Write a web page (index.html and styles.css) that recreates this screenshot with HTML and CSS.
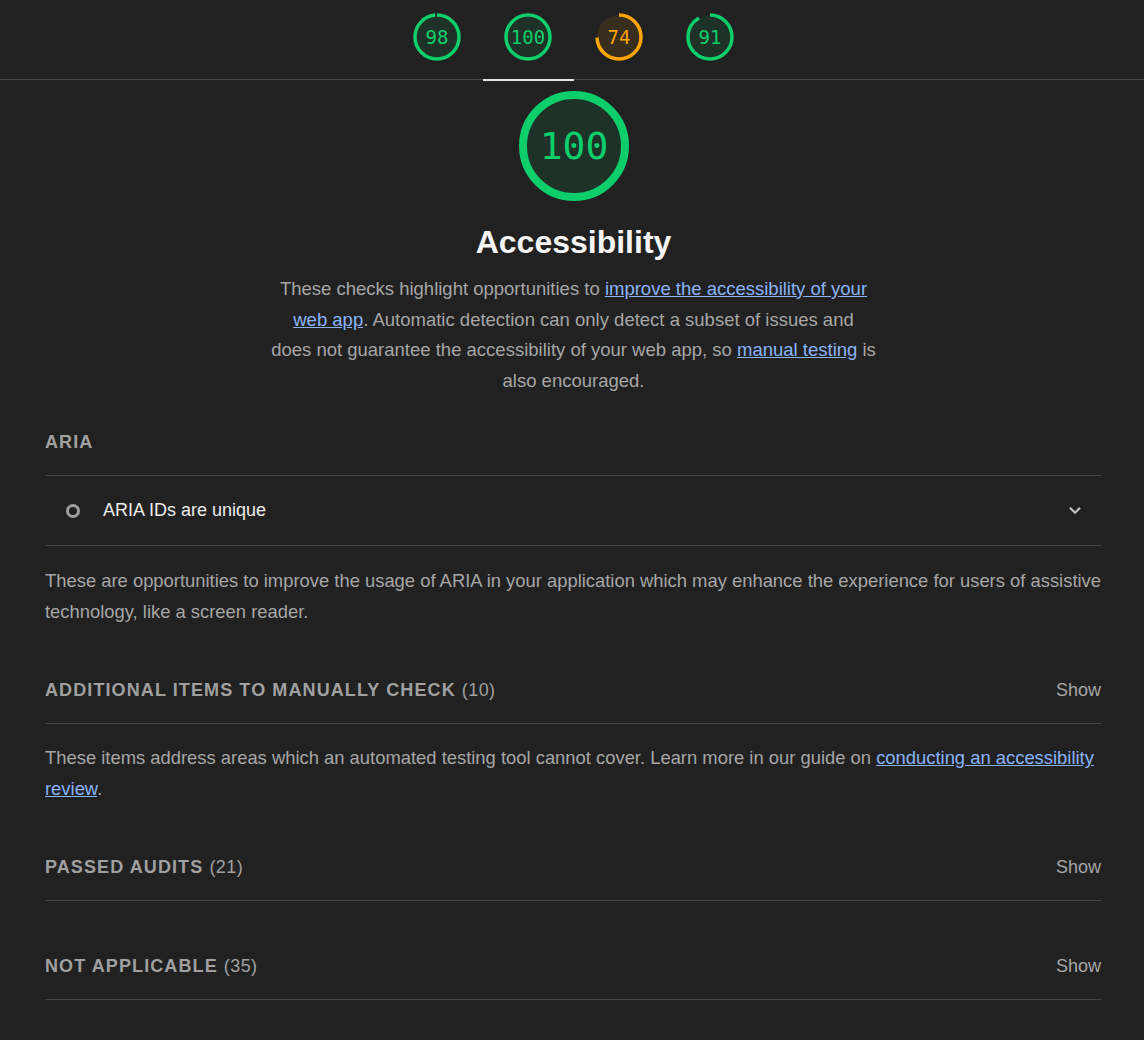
FILE: index.html
```html
<!DOCTYPE html>
<html lang="en">
<head>
<meta charset="utf-8">
<title>Lighthouse – Accessibility</title>
<link rel="stylesheet" href="styles.css">
</head>
<body>
<nav class="tabs">
  <a class="tab" href="#">
    <svg class="gauge-sm" viewBox="0 0 48 48">
      <circle class="fill pass" cx="24" cy="24" r="22"/>
      <circle class="arc pass" cx="24" cy="24" r="22" stroke-dasharray="135.5 200" transform="rotate(-90 24 24)"/>
      <text class="num pass" x="24" y="30.5">98</text>
    </svg>
  </a>
  <a class="tab active" href="#">
    <svg class="gauge-sm" viewBox="0 0 48 48">
      <circle class="fill pass" cx="24" cy="24" r="22"/>
      <circle class="arc pass" cx="24" cy="24" r="22"/>
      <text class="num pass" x="24" y="30.5">100</text>
    </svg>
  </a>
  <a class="tab" href="#">
    <svg class="gauge-sm" viewBox="0 0 48 48">
      <circle class="fill avg" cx="24" cy="24" r="22"/>
      <circle class="arc avg" cx="24" cy="24" r="22" stroke-dasharray="102.3 200" transform="rotate(-90 24 24)"/>
      <text class="num avg" x="24" y="30.5">74</text>
    </svg>
  </a>
  <a class="tab" href="#">
    <svg class="gauge-sm" viewBox="0 0 48 48">
      <circle class="fill pass" cx="24" cy="24" r="22"/>
      <circle class="arc pass" cx="24" cy="24" r="22" stroke-dasharray="125.8 200" transform="rotate(-90 24 24)"/>
      <text class="num pass" x="24" y="30.5">91</text>
    </svg>
  </a>
</nav>

<header class="score">
  <svg class="gauge-lg" viewBox="0 0 110 110">
    <circle class="fill pass" cx="55" cy="55" r="51"/>
    <circle class="arc-lg pass" cx="55" cy="55" r="51"/>
    <text class="num-lg pass" x="55" y="68">100</text>
  </svg>
  <h1 class="title">Accessibility</h1>
  <p class="intro">These checks highlight opportunities to <a href="#">improve the accessibility of your web app</a>. Automatic detection can only detect a subset of issues and does not guarantee the accessibility of your web app, so <a href="#">manual testing</a> is also encouraged.</p>
</header>

<main class="groups">
  <section class="group first">
    <div class="group-head"><span class="label">ARIA</span></div>
    <div class="audit">
      <span class="audit-icon"></span>
      <span class="audit-title">ARIA IDs are unique</span>
      <svg class="chevron" viewBox="0 0 12 8"><path d="M1.5 1.5 L6 6 L10.5 1.5"/></svg>
    </div>
    <p class="group-desc">These are opportunities to improve the usage of ARIA in your application which may enhance the experience for users of assistive technology, like a screen reader.</p>
  </section>

  <section class="group">
    <div class="group-head"><span class="label">Additional items to manually check <span class="count">(10)</span></span><span class="show">Show</span></div>
    <p class="group-desc">These items address areas which an automated testing tool cannot cover. Learn more in our guide on <a href="#">conducting an accessibility review</a>.</p>
  </section>

  <section class="group">
    <div class="group-head"><span class="label">Passed audits <span class="count">(21)</span></span><span class="show">Show</span></div>
  </section>

  <section class="group">
    <div class="group-head"><span class="label">Not applicable <span class="count">(35)</span></span><span class="show">Show</span></div>
  </section>
</main>
</body>
</html>
```

FILE: styles.css
```css
html, body {
  margin: 0;
  padding: 0;
  background: #212121;
  font-family: "Liberation Sans", Arial, sans-serif;
  color: #a6a6a6;
}

a { color: #8ab4f8; }

.tabs {
  display: flex;
  justify-content: center;
  height: 79px;
  border-bottom: 1px solid #444;
  padding-left: 3px;
}

.tab {
  width: 91px;
  display: flex;
  justify-content: center;
  padding-top: 13px;
  box-sizing: border-box;
  height: 81px;
}

.tab.active {
  border-bottom: 2px solid #e6e6e6;
}

.gauge-sm {
  width: 48px;
  height: 48px;
}

.fill.pass { fill: rgba(12, 206, 107, 0.1); }
.fill.avg { fill: rgba(255, 164, 0, 0.1); }

.arc {
  fill: none;
  stroke-width: 3.5;
}
.arc.pass { stroke: #0cce6b; }
.arc.avg { stroke: #ffa400; }

.num {
  font-family: "DejaVu Sans Mono", monospace;
  font-size: 19px;
  text-anchor: middle;
}
.num.pass { fill: #0cce6b; }
.num.avg { fill: #ffa400; }

.score {
  display: flex;
  flex-direction: column;
  align-items: center;
  padding-top: 11px;
  padding-left: 3px;
}

.gauge-lg {
  width: 110px;
  height: 110px;
}

.arc-lg {
  fill: none;
  stroke: #0cce6b;
  stroke-width: 8;
}

.num-lg {
  font-family: "DejaVu Sans Mono", monospace;
  font-size: 38px;
  text-anchor: middle;
  fill: #0cce6b;
}

.title {
  margin: 21px 0 0;
  font-size: 32px;
  line-height: 40px;
  font-weight: bold;
  color: #f5f5f5;
}

.intro {
  margin: 12px 0 0;
  max-width: 604.8px;
  text-align: center;
  font-size: 18.5px;
  line-height: 30.6px;
  color: #a6a6a6;
}

.groups {
  padding: 0 43px 0 45px;
}

.group {
  margin-top: 53px;
}
.group.first {
  margin-top: 34px;
}

.group-head {
  display: flex;
  justify-content: space-between;
  align-items: center;
  line-height: 24px;
  padding-bottom: 21px;
  border-bottom: 1px solid #444;
}

.label {
  font-size: 18px;
  font-weight: bold;
  letter-spacing: 1.1px;
  text-transform: uppercase;
  color: #a0a0a0;
}

.count {
  font-weight: normal;
  font-size: 18px;
  letter-spacing: 0.4px;
}

.show {
  font-size: 18px;
  color: #a6a6a6;
}

.audit {
  display: flex;
  align-items: center;
  height: 69px;
  padding-left: 21px;
  padding-right: 19px;
  border-bottom: 1px solid #444;
}

.audit-icon {
  width: 14px;
  height: 14px;
  box-sizing: border-box;
  border: 3px solid #9e9e9e;
  border-radius: 50%;
}

.audit-title {
  flex: 1;
  margin-left: 23px;
  font-size: 18px;
  color: #ececec;
}

.chevron {
  width: 14px;
  height: 9px;
  fill: none;
  stroke: #bdbdbd;
  stroke-width: 2;
}

.group-desc {
  margin: 18.5px 0 -2px;
  font-size: 18.4px;
  line-height: 31px;
  color: #a6a6a6;
}
```
